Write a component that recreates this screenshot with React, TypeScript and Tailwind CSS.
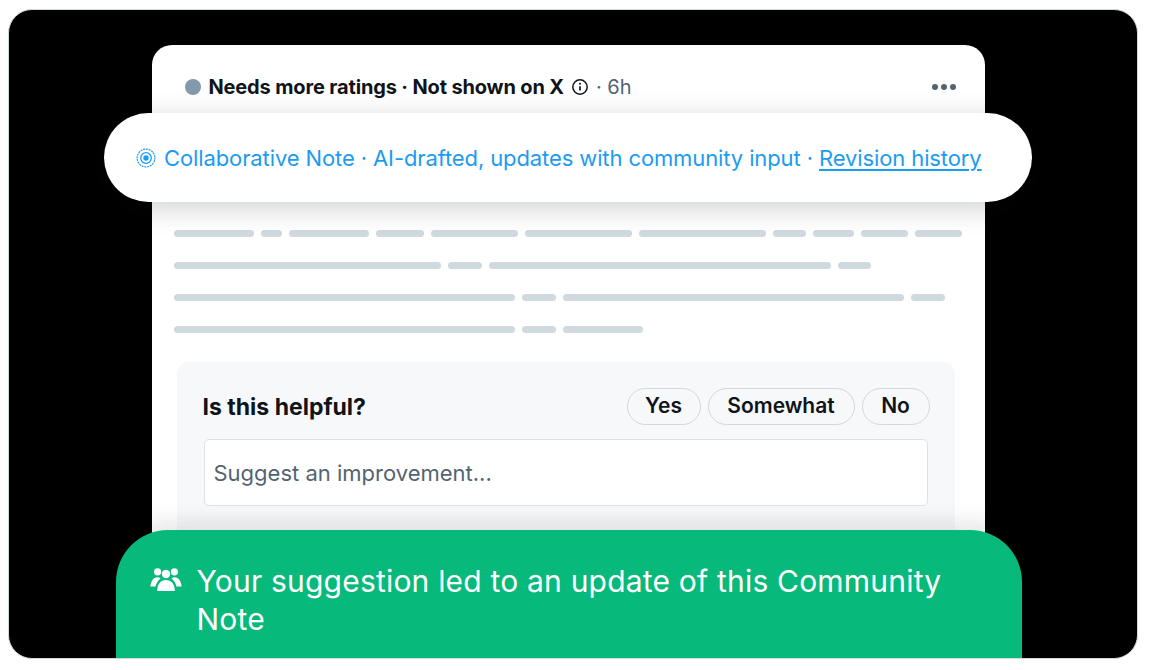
const font = { fontFamily: "Inter, 'Noto Sans', sans-serif" };

const skeletonRows = [
  [80, 21, 80, 48, 87, 107, 127, 33, 41, 47, 47],
  [267, 34, 342, 33],
  [341, 34, 341, 34],
  [341, 34, 80],
];

function RingIcon() {
  return (
    <svg viewBox="0 0 20 20" className="w-[20px] h-[20px] shrink-0 text-[#1d9bf0]" fill="none" stroke="currentColor">
      <circle cx="10" cy="10" r="8.9" strokeWidth="1.2" strokeDasharray="1.1 1.7" strokeLinecap="round" />
      <circle cx="10" cy="10" r="5.3" strokeWidth="1.3" />
      <circle cx="10" cy="10" r="2.7" fill="currentColor" stroke="none" />
    </svg>
  );
}

function InfoIcon() {
  return (
    <svg viewBox="0 0 18 18" className="w-[18px] h-[18px] shrink-0 text-[#0f1419]" fill="none" stroke="currentColor">
      <circle cx="9" cy="9" r="7.2" strokeWidth="1.5" />
      <path d="M9 8.2v4.4" strokeWidth="1.7" />
      <circle cx="9" cy="5.7" r="1" fill="currentColor" stroke="none" />
    </svg>
  );
}

function PeopleIcon() {
  return (
    <svg viewBox="0 0 32 24" className="w-[32px] h-[24px] shrink-0" fill="white">
      <circle cx="7.6" cy="4.8" r="3.6" />
      <circle cx="24.4" cy="4.8" r="3.6" />
      <circle cx="16" cy="7" r="4.2" />
      <path d="M7.2 24c0-6.600 3.400-11 8.800-11s8.800 4.400 8.800 11z" />
      <path d="M0.4 19.500c.4-5 3-9.200 6.800-9.200 1.300 0 2.500.4 3.400 1.100-2.600 1.800-4.300 4.600-5 8.100z" />
      <path d="M31.600 19.500c-.4-5-3-9.200-6.800-9.200-1.300 0-2.500.4-3.400 1.100 2.600 1.800 4.300 4.600 5 8.100z" />
    </svg>
  );
}

function RateButton({ label, width }: { label: string; width: string }) {
  return (
    <button className={`${width} h-[37px] rounded-full border-[1.5px] border-[#cfd9de] text-[21px] font-semibold text-[#0f1419] flex items-center justify-center`}>
      {label}
    </button>
  );
}

export default function App() {
  return (
    <div className="w-[1150px] h-[670px] bg-white pt-[9px] pl-[8px] overflow-hidden" style={font}>
      <div className="relative w-[1130px] h-[650px] bg-black rounded-[24px] border-[1.5px] border-[#cfd9de] overflow-hidden">
        {/* Note card */}
        <div className="ml-[142.5px] mt-[34.5px] w-[833px] h-[620px] bg-white rounded-t-[20px] flex flex-col">
          <div className="h-[86px] pl-[33px] pr-[29px] pb-[2px] flex items-center">
            <span className="w-[16px] h-[16px] rounded-full bg-[#829aab] shrink-0" />
            <span className="ml-[8px] text-[20px] font-bold text-[#0f1419] tracking-[-0.15px]">Needs more ratings · Not shown on X</span>
            <span className="ml-[7px]"><InfoIcon /></span>
            <span className="ml-[7px] text-[20px] text-[#536471]">· 6h</span>
            <div className="ml-auto flex gap-[3px]">
              <span className="w-[6px] h-[6px] rounded-full bg-[#536471]" />
              <span className="w-[6px] h-[6px] rounded-full bg-[#536471]" />
              <span className="w-[6px] h-[6px] rounded-full bg-[#536471]" />
            </div>
          </div>

          {/* Skeleton text */}
          <div className="mt-[99px] pl-[22px] flex flex-col gap-[25px]">
            {skeletonRows.map((row, i) => (
              <div key={i} className="flex gap-[7px]">
                {row.map((w, j) => (
                  <div key={j} className="h-[7px] rounded-full bg-[#cfd9de]" style={{ width: w }} />
                ))}
              </div>
            ))}
          </div>

          {/* Rating panel */}
          <div className="mt-[29px] ml-[25px] w-[778px] h-[300px] bg-[#f7f8fa] rounded-[12px] pl-[26px] pr-[25px] pt-[26px]">
            <div className="flex items-center justify-between">
              <span className="pt-[2px] text-[23px] font-bold text-[#0f1419]">Is this helpful?</span>
              <div className="flex gap-[7px]">
                <RateButton label="Yes" width="w-[74px]" />
                <RateButton label="Somewhat" width="w-[147px]" />
                <RateButton label="No" width="w-[68px]" />
              </div>
            </div>
            <div className="mt-[14px] ml-[1px] h-[67px] w-[724px] bg-white border-[1.5px] border-[#dbe2e6] rounded-[5px] pl-[9px] pt-[2px] flex items-center text-[22px] text-[#536471]">
              Suggest an improvement...
            </div>
          </div>
        </div>

        {/* Collaborative note pill */}
        <div className="absolute left-[95px] top-[102.5px] w-[928px] h-[89px] bg-white rounded-full shadow-[0_6px_28px_rgba(15,20,25,0.2)] pl-[32px] pt-[2px] flex items-center gap-[8px] text-[22px] tracking-[-0.11px] text-[#1d9bf0]">
          <RingIcon />
          <span className="whitespace-nowrap">
            Collaborative Note · AI-drafted, updates with community input · <span className="underline underline-offset-[3px]">Revision history</span>
          </span>
        </div>

        {/* Green toast */}
        <div className="absolute left-[106.5px] top-[519.5px] w-[906px] h-[130px] bg-[#07b97a] rounded-t-[52px] shadow-[0_-6px_24px_rgba(15,20,25,0.12)] pl-[34px] pr-[60px] pt-[32px] flex gap-[15px] text-[30px] leading-[38px] tracking-[0.2px] text-white">
          <span className="pt-[5px]"><PeopleIcon /></span>
          <p>Your suggestion led to an update of this Community Note</p>
        </div>
      </div>
    </div>
  );
}
